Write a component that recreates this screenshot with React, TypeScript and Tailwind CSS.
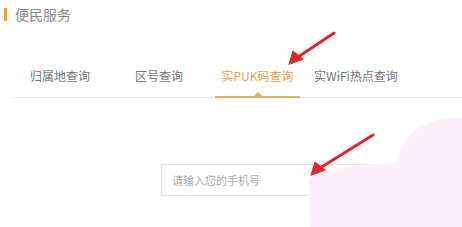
import React from "react";

export default function App() {
  const font = { fontFamily: '"Microsoft YaHei", "Noto Sans CJK SC", sans-serif' };
  return (
    <div className="relative w-[462px] h-[227px] bg-white overflow-hidden" style={font}>
      <div className="flex items-center pt-[5px] pl-[4px] gap-[8px]">
        <div className="w-[3px] h-[13px] bg-[#f0a040]" />
        <div className="text-[14px] leading-[18px] text-[#8a8a8a]">便民服务</div>
      </div>
      <div className="mt-[27px] ml-[13px] border-b border-[#e8e8e8] flex items-end h-[48px] text-[12px] text-[#777]">
        <div className="w-[94px] flex justify-center pb-[12px]">归属地查询</div>
        <div className="w-[104px] flex justify-center pb-[12px]">区号查询</div>
        <div className="relative w-[85px] ml-[4px] flex justify-center pb-[12px] text-[#f0a040]">
          实PUK码查询
          <div className="absolute left-0 right-0 -bottom-[1px] h-[2px] bg-[#eab060]" />
          <div className="absolute left-[39px] bottom-[1px] w-0 h-0 border-l-[4px] border-r-[4px] border-b-[4px] border-l-transparent border-r-transparent border-b-[#eab060]" />
        </div>
        <div className="w-[112px] flex justify-center pb-[12px]">实WiFi热点查询</div>
      </div>
      <div className="mt-[66px] ml-[161px] w-[240px] h-[32px] border border-[#e3e3e3] flex items-center pl-[10px] text-[11px] text-[#aaa]">
        请输入您的手机号
      </div>
      <svg className="absolute inset-0" width="462" height="227" viewBox="0 0 462 227">
        <path d="M310 227 L309 178 Q325 170 355 166 L398 162 Q402 140 418 128 Q440 116 462 118 L462 227 Z" fill="#fdf0fb" />
        <g fill="#e0262c" stroke="#e0262c" strokeLinecap="round">
          <line x1="334" y1="33" x2="298" y2="57" strokeWidth="3" />
          <polygon points="289,64 293,51 303,59" />
          <line x1="373" y1="135" x2="320" y2="168" strokeWidth="3" />
          <polygon points="311,175 315,162 325,170" />
        </g>
      </svg>
    </div>
  );
}
